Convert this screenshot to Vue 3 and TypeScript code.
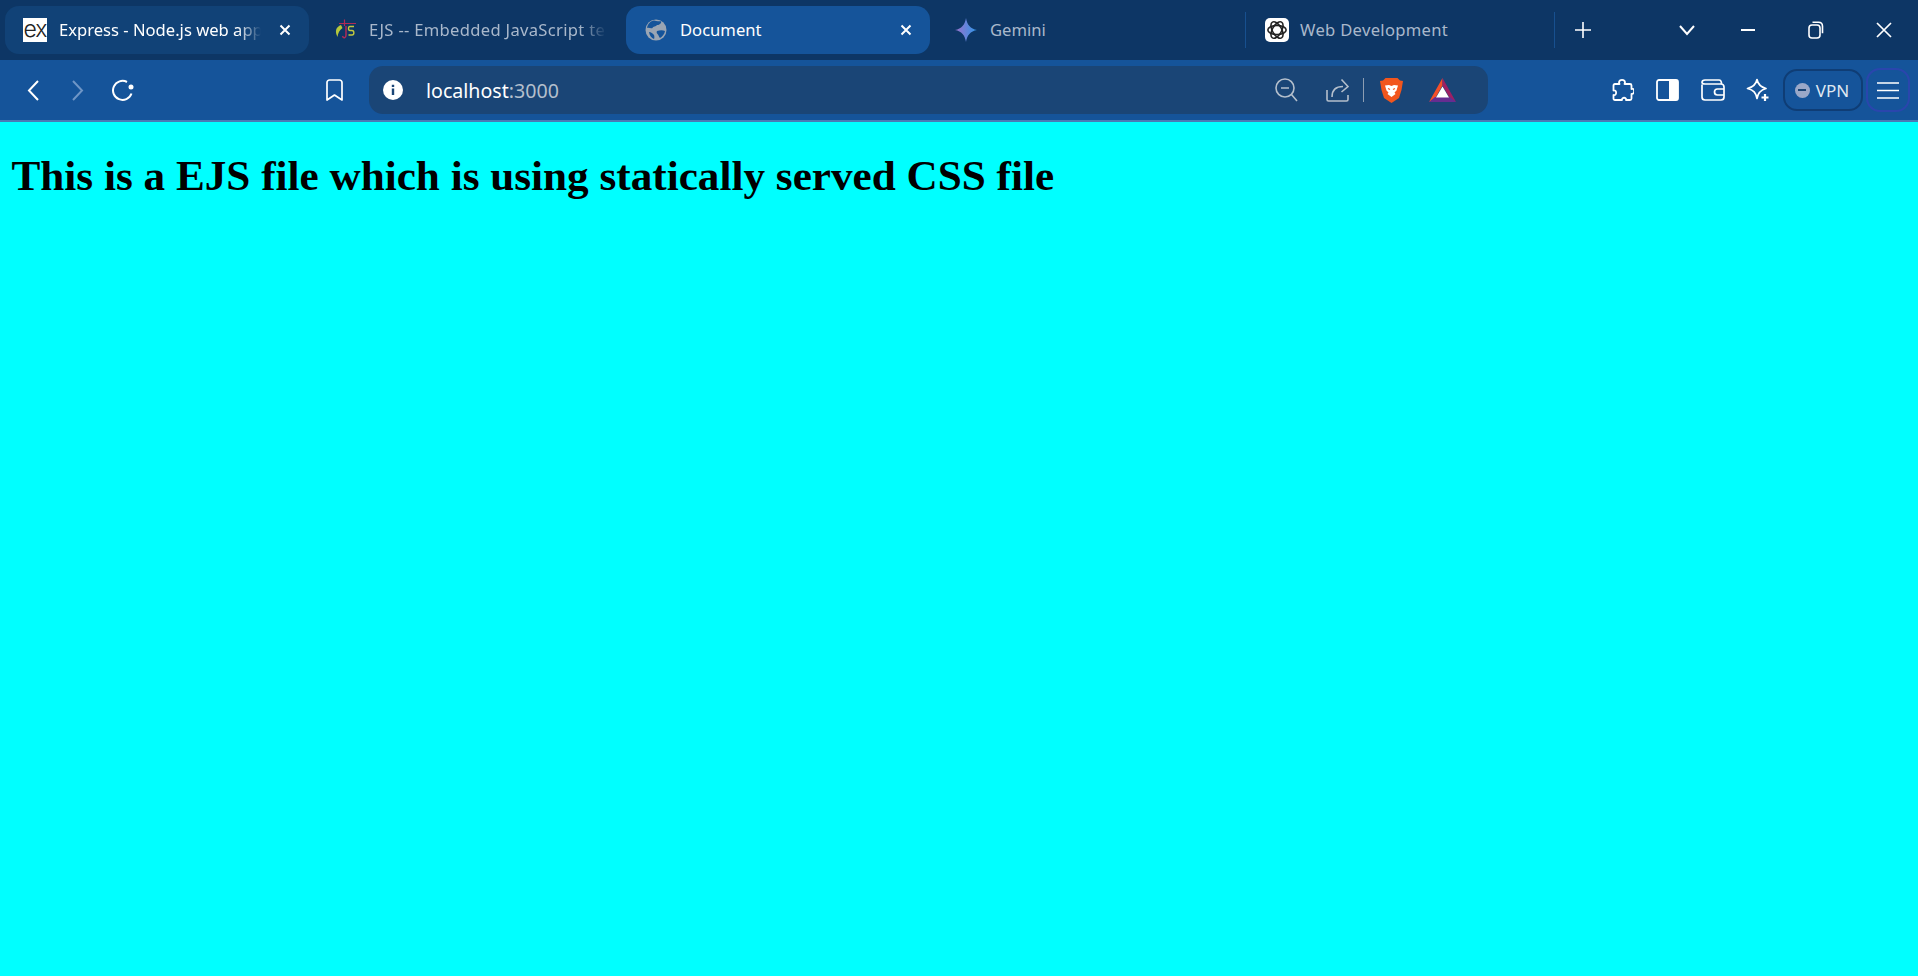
<template>
  <div class="page">
    <header class="browser">
      <!-- tab strip -->
      <div class="strip">
        <div
          v-for="tab in tabs"
          :key="tab.id"
          class="tab"
          :class="[tab.id, { open: tab.state === 'open', active: tab.state === 'active' }]"
        >
          <span v-if="tab.id === 'express'" class="fav fav-ex">ex</span>
          <svg v-else-if="tab.id === 'ejs'" class="fav" viewBox="0 0 24 24" fill="none">
            <path d="M8 7C3 9 1.500 13 4.500 19 5 15 6.500 12 9.500 10" fill="#b5c83c" />
            <path d="M11.500 1.500V8M6 5.500h17" stroke="#b12a55" stroke-width="1.200" />
            <path d="M9.500 18c1 3 3.500 2 3.500-1V8" stroke="#b12a55" stroke-width="1.500" />
            <path d="M21 8.500h-4c-2 0-2 4 0 4h2c2.500 0 2.500 4.500 0 4.500h-3.500" stroke="#c2c93e" stroke-width="1.400" />
          </svg>
          <svg v-else-if="tab.id === 'doc'" class="fav" viewBox="0 0 24 24">
            <circle cx="12" cy="12" r="10.500" fill="#9aa5b3" />
            <path d="M10 2.500c3 1 5 .5 7 .8 1 2-2 4-4 3.700-1 2-4 1-4.500 3C7 11 4.500 9 3 10c.6-4 3.500-7 7-7.500ZM13 13c3-1 6-1 8 0-.5 3-2.500 5.500-5 7-1.500-1-1-3-2.500-4-1-.8-1-2-.5-3ZM5 14c2 0 4 1.500 5 3 .5 1.500.5 3 0 4-2.500-.8-4.500-3.500-5-7Z" fill="#15549a" />
          </svg>
          <svg v-else-if="tab.id === 'gemini'" class="fav" viewBox="0 0 24 24">
            <defs>
              <linearGradient id="gem" x1="0" y1="0" x2="1" y2="0">
                <stop offset="0" stop-color="#9b72cb" />
                <stop offset="1" stop-color="#2f96e8" />
              </linearGradient>
            </defs>
            <path d="M12 0c1 6.500 4.500 11 11 12-6.500 1-10 5.500-11 12-1-6.500-4.500-11-11-12C7.500 11 11 6.500 12 0Z" fill="url(#gem)" />
          </svg>
          <span class="title" :class="{ faded: tab.long }">{{ tab.title }}</span>
          <svg v-if="tab.state" class="close" viewBox="0 0 12 12" fill="none" stroke="#fff" stroke-width="2">
            <path d="m1.500 1.500 9 9m0-9-9 9" />
          </svg>
        </div>
        <span class="sep"></span>
        <div class="tab web">
          <span class="fav fav-gpt">
            <svg viewBox="0 0 24 24" fill="none" stroke="#222" stroke-width="1.700">
              <ellipse cx="12" cy="12" rx="10" ry="5" />
              <ellipse cx="12" cy="12" rx="10" ry="5" transform="rotate(60 12 12)" />
              <ellipse cx="12" cy="12" rx="10" ry="5" transform="rotate(120 12 12)" />
            </svg>
          </span>
          <span class="title">Web Development</span>
        </div>
        <span class="sep"></span>
        <button class="strip-btn plus">
          <svg width="18" height="18" viewBox="0 0 18 18" stroke="#fff" stroke-width="1.600"><path d="M9 1v16M1 9h16" /></svg>
        </button>
        <button class="strip-btn chevron">
          <svg width="16" height="12" viewBox="0 0 16 12" fill="none" stroke="#fff" stroke-width="2"><path d="m1 2 7 8 7-8" /></svg>
        </button>
        <button class="win-btn">
          <svg width="16" height="4" viewBox="0 0 16 4" stroke="#fff" stroke-width="2"><path d="M1 2h14" /></svg>
        </button>
        <button class="win-btn">
          <svg width="16" height="18" viewBox="0 0 16 18" fill="none" stroke="#fff" stroke-width="1.600">
            <rect x="1" y="4" width="11" height="13" rx="3" />
            <path d="M4.500 1.200h6c2.500 0 4 1.500 4 4v7" />
          </svg>
        </button>
        <button class="win-btn">
          <svg width="18" height="18" viewBox="0 0 18 18" stroke="#fff" stroke-width="1.700"><path d="m2 2 14 14M16 2 2 16" /></svg>
        </button>
      </div>

      <!-- toolbar -->
      <div class="toolbar">
        <div class="nav">
          <button class="tool">
            <svg width="12" height="21" viewBox="0 0 12 21" fill="none" stroke="#fff" stroke-width="2"><path d="M11 1 2 10.500 11 20" /></svg>
          </button>
          <button class="tool">
            <svg width="12" height="21" viewBox="0 0 12 21" fill="none" stroke="#6f96c6" stroke-width="2"><path d="m1 1 9 9.500L1 20" /></svg>
          </button>
          <button class="tool">
            <svg width="23" height="22" viewBox="0 0 23 22" fill="none" stroke="#fff" stroke-width="2">
              <path d="M19.500 14.500A9.500 9.500 0 1 1 15 3" />
              <circle cx="19" cy="8" r="2.500" fill="#fff" stroke="none" />
            </svg>
          </button>
        </div>
        <button class="tool bookmark">
          <svg width="17" height="22" viewBox="0 0 17 22" fill="none" stroke="#fff" stroke-width="1.700">
            <path d="M3.500 1h10A2.500 2.500 0 0 1 16 3.500V21l-7.500-5L1 21V3.500A2.500 2.500 0 0 1 3.500 1Z" stroke-linejoin="round" />
          </svg>
        </button>
        <div class="omnibox">
          <svg class="info" width="20" height="20" viewBox="0 0 20 20">
            <circle cx="10" cy="10" r="10" fill="#fff" />
            <path d="M8.800 8.500h2.400V15H8.800zM8.800 4.800h2.400v2.300H8.800z" fill="#1a4576" />
          </svg>
          <span class="url">localhost<span class="port">:3000</span></span>
          <div class="omni-actions">
            <svg width="23" height="24" viewBox="0 0 23 24" fill="none" stroke="#b4bfcc" stroke-width="1.600">
              <circle cx="10" cy="10" r="9" />
              <path d="M6 10h8M16.500 16.500 22 23" />
            </svg>
            <svg class="share" width="23" height="24" viewBox="0 0 23 24" fill="none" stroke="#b4bfcc" stroke-width="1.600">
              <path d="M1 12v9.500c0 1 .6 1.500 1.500 1.500H20.500c1 0 1.500-.5 1.500-1.500V17" />
              <path d="M6 19c0-7 4-10.500 11-10.500M15.500 1.500 22 8.500 15.500 14" />
            </svg>
            <span class="omni-div"></span>
            <svg class="brave" width="23" height="25" viewBox="0 0 23 25">
              <path d="M5.500 0h12L20 2.500l3 .5-1.500 9-2.500 8-7.500 5L4 20l-2.500-8L0 3l3-.5Z" fill="#f2561d" />
              <path d="M5 7.500 9 7l2.500 1L14 7l4 .5-1.500 5-2 2 1 1.500-4 3-4-3 1-1.500-2-2Z" fill="#fff" />
              <path d="M8 10.500 10 11.500M15 10.500 13 11.500" stroke="#f2561d" stroke-width="1.200" />
            </svg>
            <svg class="bat" width="27" height="24" viewBox="0 0 27 24">
              <path d="M13.500 0 0 24l6-3.500 7.500-13Z" fill="#f4502a" />
              <path d="M13.500 0 27 24l-6-3.500-7.500-13Z" fill="#9e1f63" />
              <path d="M0 24h27l-6-5H6Z" fill="#662d91" />
              <path d="M13.500 8.500 20 19.500H7Z" fill="#fff" />
            </svg>
          </div>
        </div>
        <div class="tools-right">
          <button class="tool nudge">
            <svg width="23" height="24" viewBox="0 0 23 24" fill="none" stroke="#fff" stroke-width="1.800" stroke-linejoin="round">
              <path d="M8 4.500C8 1 14 1 14 4.500l-.5 1.500H19c1 0 1.500.5 1.500 1.500V11c3-1.500 4 5 0 5v4.500c0 1-.5 1.500-1.500 1.500h-4c.8-3-4.500-3-4 0H4c-1 0-1.500-.5-1.500-1.500V17C6 18 6 11.500 2.500 12.500V7.500C2.500 6.500 3 6 4 6h4.500Z" />
            </svg>
          </button>
          <button class="tool nudge">
            <svg width="23" height="22" viewBox="0 0 23 22" fill="none">
              <rect x="1" y="1" width="21" height="20" rx="2" stroke="#fff" stroke-width="1.800" />
              <path d="M13 1h7a2 2 0 0 1 2 2v16a2 2 0 0 1-2 2h-7Z" fill="#fff" />
            </svg>
          </button>
          <button class="tool">
            <svg width="24" height="22" viewBox="0 0 24 22" fill="none" stroke="#fff" stroke-width="1.700">
              <path d="M1 5.500V18c0 1.800 1.200 3 3 3h16c1.800 0 3-1.200 3-3V8c0-1.800-1.200-3-3-3H4C2 5 1 4 1 3.500 1 2 2 1 4 1h14c1.500 0 2.500 1 2.500 4" />
              <path d="M23 10h-6.500a3 3 0 0 0 0 6H23" />
            </svg>
          </button>
          <button class="tool">
            <svg width="24" height="24" viewBox="0 0 24 24" fill="none" stroke="#fff" stroke-width="1.700" stroke-linejoin="round">
              <path d="M11 1.500c1 5 3.500 7.500 9 9-5.500 1.500-8 4-9 10-1-6-3.500-8.500-9.500-10C7.500 9 10 6.500 11 1.500Z" />
              <path d="M19 16v7M15.500 19.500h7" stroke-width="2.200" />
            </svg>
          </button>
          <div class="vpn"><span class="vpn-dot"></span>VPN</div>
          <button class="menu">
            <svg width="22" height="17" viewBox="0 0 22 17" stroke="#fff" stroke-width="1.700"><path d="M0 1h22M0 8.500h22M0 16h22" /></svg>
          </button>
        </div>
      </div>
    </header>

    <main class="content">
      <h1>This is a EJS file which is using statically served CSS file</h1>
    </main>
  </div>
</template>

<script setup lang="ts">
interface Tab {
  id: string;
  title: string;
  state?: "open" | "active";
  long?: boolean;
}

const tabs: Tab[] = [
  { id: "express", title: "Express - Node.js web app", state: "open", long: true },
  { id: "ejs", title: "EJS -- Embedded JavaScript te", long: true },
  { id: "doc", title: "Document", state: "active" },
  { id: "gemini", title: "Gemini" },
];
</script>

<style>
html,
body {
  height: 100%;
  background: #00ffff;
}
</style>

<style scoped>
.page {
  min-height: 100vh;
  display: flex;
  flex-direction: column;
}

.browser {
  font-family: "Noto Sans", "Open Sans", sans-serif;
  flex: none;
}

button {
  border: none;
  background: none;
  padding: 0;
  display: flex;
  align-items: center;
  justify-content: center;
}

/* tab strip */
.strip {
  height: 60px;
  box-sizing: border-box;
  padding: 6px 0 6px 5px;
  display: flex;
  align-items: center;
  gap: 4px;
  background: #0d3665;
}

.tab {
  width: 304px;
  height: 48px;
  box-sizing: border-box;
  padding: 0 18px;
  border-radius: 14px;
  display: flex;
  align-items: center;
  gap: 12px;
  flex: none;
}

.tab.open {
  background: #114277;
}

.tab.active {
  background: #15549a;
}

.tab.ejs {
  width: 309px;
  padding-left: 20px;
}

.tab.gemini {
  width: 307px;
  padding-left: 20px;
}

.tab.web {
  width: 300px;
  padding-left: 15px;
  gap: 11px;
}

.fav {
  width: 24px;
  height: 24px;
  flex: none;
}

.fav-ex {
  background: #fff;
  color: #222;
  font: 300 23px/22px Inter, "Liberation Sans", sans-serif;
  letter-spacing: -1px;
  text-align: center;
}

.fav-gpt {
  background: #fff;
  border-radius: 5px;
  padding: 1px;
  box-sizing: border-box;
}

.fav-gpt svg {
  display: block;
  width: 22px;
  height: 22px;
}

.title {
  flex: 1;
  min-width: 0;
  white-space: nowrap;
  font-size: 16.6px;
  line-height: 24px;
  color: #a9b8cb;
}

.open .title,
.active .title {
  color: #fff;
}

.title.faded {
  -webkit-mask-image: linear-gradient(90deg, #000 178px, transparent 202px);
  mask-image: linear-gradient(90deg, #000 178px, transparent 202px);
}

.tab.ejs .title {
  letter-spacing: 0.3px;
  -webkit-mask-image: linear-gradient(90deg, #000 210px, transparent 238px);
  mask-image: linear-gradient(90deg, #000 210px, transparent 238px);
}

.tab.web .title {
  letter-spacing: 0.3px;
}

.close {
  width: 12px;
  height: 12px;
  flex: none;
}

.sep {
  width: 1px;
  height: 36px;
  background: #17508f;
  flex: none;
}

.strip-btn {
  width: 40px;
  height: 40px;
  flex: none;
}

.plus {
  margin-left: 4px;
}

.chevron {
  margin-left: auto;
  margin-right: 7px;
}

.win-btn {
  width: 68px;
  height: 48px;
  margin-left: -4px;
  flex: none;
}

/* toolbar */
.toolbar {
  height: 60px;
  box-sizing: border-box;
  padding: 6px 8px 6px 15px;
  display: flex;
  align-items: center;
  background: #15549a;
}

.nav,
.tools-right {
  display: flex;
  align-items: center;
  gap: 9px;
}

.tool {
  width: 36px;
  height: 36px;
  flex: none;
}

.nudge svg {
  margin-right: 2px;
}

.bookmark {
  margin-left: 175px;
}

.omnibox {
  width: 1119px;
  height: 48px;
  margin-left: 17px;
  padding: 0 32px 0 14px;
  box-sizing: border-box;
  border-radius: 14px;
  background: #1a4576;
  display: flex;
  align-items: center;
  flex: none;
}

.info {
  flex: none;
}

.url {
  margin-left: 23px;
  font-size: 19.6px;
  color: #fff;
}

.port {
  color: #b4bfcc;
}

.omni-actions {
  margin-left: auto;
  display: flex;
  align-items: center;
}

.share {
  margin-left: 28px;
}

.omni-div {
  width: 1px;
  height: 24px;
  margin: 0 16px 0 14px;
  background: #8c9db2;
}

.bat {
  margin-left: 26px;
}

.tools-right {
  margin-left: auto;
}

.vpn {
  width: 80px;
  height: 42px;
  margin-left: -2px;
  padding-right: 2px;
  box-sizing: border-box;
  border: 2px solid #0f3d75;
  border-radius: 14px;
  display: flex;
  align-items: center;
  justify-content: center;
  gap: 6px;
  font-size: 17px;
  color: #dfe7f1;
}

.vpn-dot {
  width: 15px;
  height: 15px;
  border-radius: 50%;
  background: linear-gradient(#1a4576, #1a4576) center / 8px 2px no-repeat #9aa8c8;
}

.menu {
  width: 44px;
  height: 44px;
  margin-left: -6px;
  box-sizing: border-box;
  border: 2px solid #2a46ad;
  border-radius: 14px;
}

/* page loaded in the browser */
.content {
  flex: 1;
  border-top: 2px solid #4a7ab5;
  background: #00ffff;
  padding: 0 11.5px;
}

h1 {
  margin: 28.6px 0;
  font: bold 43.2px "Liberation Serif", "Times New Roman", serif;
  color: #000;
}
</style>
